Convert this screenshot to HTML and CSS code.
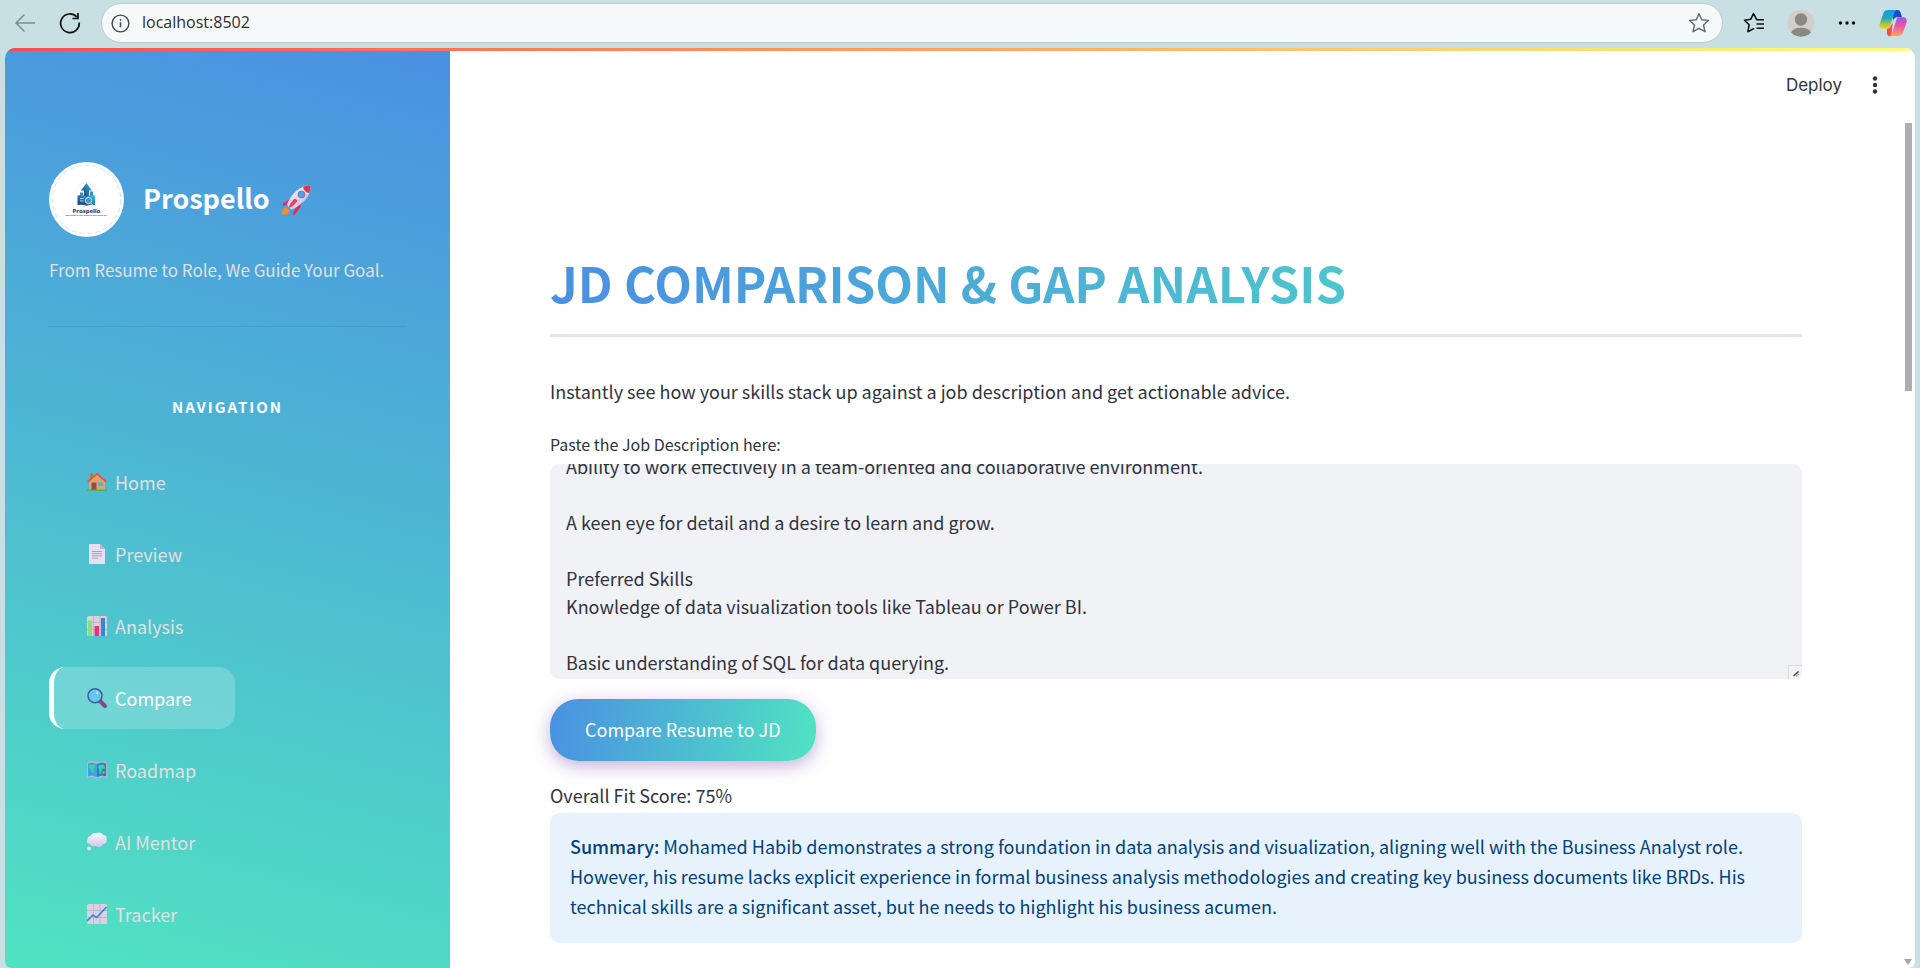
FILE: index.html
```html
<!DOCTYPE html>
<html lang="en">
<head>
<meta charset="utf-8">
<title>Prospello</title>
<link rel="stylesheet" href="styles.css">
</head>
<body>
<header class="toolbar">
  <button class="tool tool-back" aria-label="Back">
    <svg width="22" height="22" viewBox="0 0 22 22" fill="none" stroke="#7d8e93" stroke-width="1.5"><path d="M21 11H2M10.500 2.500 2 11l8.500 8.500"/></svg>
  </button>
  <button class="tool tool-reload" aria-label="Reload">
    <svg width="22" height="22" viewBox="0 0 22 22" fill="none" stroke="#111" stroke-width="1.700"><path d="M20.200 10.500A9.300 9.300 0 1 1 17.800 5M19 1v5.500h-5.500"/></svg>
  </button>
  <div class="address">
    <svg width="19" height="19" viewBox="0 0 19 19" fill="none" stroke="#45494a" stroke-width="1.400"><circle cx="9.500" cy="9.500" r="8.400"/><path d="M9.500 8.300v5" stroke-width="1.600"/><circle cx="9.500" cy="5.900" r=".6" fill="#45494a" stroke-width=".8"/></svg>
    <input class="url" type="text" value="localhost:8502" aria-label="Address">
    <button class="tool" aria-label="Add to favorites">
      <svg width="22" height="22" viewBox="0 0 22 22" fill="none" stroke="#62686a" stroke-width="1.400" stroke-linejoin="round"><path d="m11 1.700 2.700 6 6.800.7-5 4.600 1.500 6.700-6-3.400-6 3.400L6.500 13l-5-4.600 6.800-.7Z"/></svg>
    </button>
  </div>
  <div class="tools">
    <button class="tool" aria-label="Favorites">
      <svg width="22" height="22" viewBox="0 0 22 22" fill="none" stroke="#111" stroke-width="1.600" stroke-linejoin="round"><path d="M21 7.700h-7.300L10.500 1.500 7.800 7.200 1.500 8.200l4.600 4.600-1.200 6.900 6.300-3.300M13.500 12h7.500M13.500 16.300h7.500"/></svg>
    </button>
    <button class="tool" aria-label="Profile">
      <svg width="28" height="28" viewBox="0 0 28 28"><circle cx="14" cy="14" r="13.500" fill="#d2cfcb"/><circle cx="14" cy="10.500" r="6.200" fill="#8b8783"/><path d="M4 23.200a11 7.500 0 0 1 20 0 13.500 13.500 0 0 1-20 0Z" fill="#8b8783"/></svg>
    </button>
    <button class="tool" aria-label="Settings and more">
      <svg width="20" height="20" viewBox="0 0 20 20" fill="#111"><circle cx="3.500" cy="10" r="1.700"/><circle cx="10" cy="10" r="1.700"/><circle cx="16.500" cy="10" r="1.700"/></svg>
    </button>
    <button class="tool" aria-label="Copilot">
      <svg width="28" height="28" viewBox="0 0 28 28">
        <defs>
          <linearGradient id="cpA" x1="0" y1="0" x2="0" y2="1"><stop offset="0" stop-color="#1597ee"/><stop offset=".45" stop-color="#2aa6b8"/><stop offset=".75" stop-color="#a5c93f"/><stop offset="1" stop-color="#ffc928"/></linearGradient>
          <linearGradient id="cpB" x1="0" y1="0" x2="0" y2="1"><stop offset="0" stop-color="#a64df0"/><stop offset=".5" stop-color="#ee5a9c"/><stop offset="1" stop-color="#ffa35c"/></linearGradient>
        </defs>
        <path d="M13 1h5.500c2 0 2.800 1.400 3.300 3.200L23 8.200h-5c-2.200 0-3 1.300-3.700 3.500Z" fill="#174bd0"/>
        <path d="M9.500 1H18c-1.600.4-2.300 1.600-2.900 3.500l-4 12.800c-.6 1.800-1.800 2.400-3.600 2.400H4.300C.800 19.700.2 17 1 14L4.200 4.600C5 2.100 6.700 1 9.500 1Z" fill="url(#cpA)"/>
        <path d="M8 19.700c2 0 3-.8 3.600-2.500l2.200-4-1.500 14H11c-2 0-2.600-1.200-3.100-3Z" fill="#f0523d"/>
        <path d="M18.500 27h-8c1.500-.4 2.200-1.500 2.800-3.400l3.900-12.400c.6-2 1.700-3 3.700-3h3.300c3 0 4 2.600 3.200 5.600L24 23.500c-.8 2.400-2.600 3.500-5.500 3.500Z" fill="url(#cpB)"/>
      </svg>
    </button>
  </div>
</header>

<div class="app">
  <div class="accent"></div>
  <aside class="sidebar">
    <div class="brand">
      <svg class="logo" width="75" height="75" viewBox="0 0 75 75" role="img" aria-label="Prospello logo">
        <defs><linearGradient id="lg" x1="1" y1="0" x2="0" y2="1"><stop offset="0" stop-color="#30c9cf"/><stop offset=".5" stop-color="#2677ad"/><stop offset="1" stop-color="#262b72"/></linearGradient></defs>
        <circle cx="37.500" cy="37.500" r="37.500" fill="#fff"/>
        <circle cx="37.500" cy="37.500" r="34.300" fill="none" stroke="#b9def0" stroke-width=".8" stroke-dasharray="5 3"/>
        <circle cx="37.500" cy="33" r="12" fill="none" stroke="#eef2f4" stroke-width=".7"/>
        <path d="m37.500 21 5.500 7.500h-3V35h-5v-6.500h-3Z" fill="url(#lg)"/>
        <path d="M28.500 33.500q5-1.500 9 1 4-2.500 8.500-1V43q-4-1-8.500.8-4.500-1.800-9-.8Z" fill="url(#lg)"/>
        <path d="M31 30.500h3v3h-3zM41 29.500h3v4h-3z" fill="#3790b8"/>
        <circle cx="39.500" cy="38.500" r="3.200" fill="#5294bd" stroke="#d8f5fa" stroke-width=".8"/>
        <path d="m42 41 3 3.500M31 36.500h3.500M31 39h3.500" stroke="#a6dce7" stroke-width="1"/>
        <text x="37.500" y="51" class="logo-name">Prospello</text>
        <path d="M16.500 53.500h42" stroke="#8c93a8" stroke-width=".8" stroke-dasharray="4 .6 6 .5 2 .6"/>
      </svg>
      <h2 class="brand-name">Prospello</h2>
      <svg width="32" height="32" viewBox="0 0 32 32" role="img" aria-label="Rocket">
        <defs><linearGradient id="rk" x1="0" y1="0" x2="1" y2="1"><stop offset="0" stop-color="#fbf6ff"/><stop offset="1" stop-color="#c4b3cc"/></linearGradient></defs>
        <path d="M6 23c-3 1-4.500 4.500-4.500 7.500 3 0 7-.5 8.500-3.500Z" fill="#fb8b2b"/>
        <path d="m10 15-7 4.500c-1 1-.500 2 .8 2l4.700-.5ZM17 21.500 12.500 30c.5 1.200 2 1 2.800.1L20.500 23l.5-6Z" fill="#e9285f"/>
        <path d="M30.500 1.500C21 1 13 7.500 7 20c.3 2 3 5 5 5.500C24.500 19.500 31 11 30.500 1.500Z" fill="url(#rk)"/>
        <path d="M30.500 1.500c-2.500 0-5 .3-7.500 1.700 1 3 2.500 5 6 6 1-2.500 1.500-5 1.500-7.700Z" fill="#e72f50"/>
        <circle cx="21.500" cy="10.500" r="3.800" fill="#7b7cb3"/><circle cx="21.500" cy="10.500" r="2.600" fill="#49a7f4"/>
        <path d="M15 14.500c-3 2-5.500 6-6.500 9.500 3.500-1 7-4 9-7.500Z" fill="#ef3b70"/>
      </svg>
    </div>
    <p class="tagline">From Resume to Role, We Guide Your Goal.</p>
    <hr class="divider">
    <h3 class="nav-title">NAVIGATION</h3>
    <nav class="nav">
      <a class="nav-item" href="#home">
        <svg width="20" height="20" viewBox="0 0 20 20"><path d="M3 1.500h3V8H3z" fill="#b17a50"/><path d="M2 9.500 10 2.500l8 7V18H2z" fill="#dba372"/><path d="M0 9.500 10 .7l10 8.800-1.200 1L10 3 1.200 10.500Z" fill="#ee4f32"/><path d="M4.500 10.500h5V18h-5z" fill="#87544a"/><path d="M11.500 10.500h4.500v3.500h-4.500z" fill="#35b5f3"/><path d="M0 17.500h20V19H0z" fill="#40b95a"/></svg>
        Home</a>
      <a class="nav-item" href="#preview">
        <svg width="20" height="20" viewBox="0 0 20 20"><path d="M2 0h11l5 5v15H2z" fill="#e6dff0"/><path d="M13 0v5h5z" fill="#bcb2c9"/><path d="M5 7.500h10M5 9.700h10M5 11.900h10M5 14.200h6" stroke="#aaa0b8"/></svg>
        Preview</a>
      <a class="nav-item" href="#analysis">
        <svg width="20" height="20" viewBox="0 0 20 20"><rect width="20" height="20" rx="1.500" fill="#d9d2e1"/><path d="M0 6.500h20M0 13.500h20M6.500 0v20M13 0v20" stroke="#b9aec6" stroke-width=".8"/><path d="M1 4.500h4V20H1z" fill="#8be07a"/><path d="M7.500 10h4.500v10H7.500z" fill="#e8337a"/><path d="M14 2h4v18h-4z" fill="#3189df"/></svg>
        Analysis</a>
      <a class="nav-item active" href="#compare" aria-current="page">
        <svg width="20" height="20" viewBox="0 0 20 20"><path d="m12.500 12.500 5.500 5.500" stroke="#884a88" stroke-width="4" stroke-linecap="round"/><circle cx="8" cy="7.800" r="7" fill="#63caeb" stroke="#465b9c" stroke-width="1.500"/><circle cx="10.300" cy="4.800" r="1.300" fill="#a9e6fa"/></svg>
        Compare</a>
      <a class="nav-item" href="#roadmap">
        <svg width="20" height="20" viewBox="0 0 20 20"><path d="m0 2 5-1 5 1.500L15 1l5 1v16l-5-1-5 1.500L5 17l-5 1Z" fill="#b8b4d7"/><path d="m1 3.500 4-1 5 1.500v13l-5-1.500-4 1Z" fill="#35a5ed"/><path d="m10 4 5-1.500 4 1v13l-4-1-5 1.500Z" fill="#267fcf"/><path d="m2 5 5-.5 1.500 2L6 9l1 3-1.500 2L4 10 2.500 8ZM12 5l5-.5 1 4-3 .5-1 5-2-1 .5-3-1.500-2ZM16 11l2 .5-1 2.500-2-1Z" fill="#47cf92"/></svg>
        Roadmap</a>
      <a class="nav-item" href="#mentor">
        <svg width="20" height="20" viewBox="0 0 20 20"><defs><linearGradient id="cl" x2="0" y2="1"><stop stop-color="#faf7ff"/><stop offset="1" stop-color="#d2c7e6"/></linearGradient></defs><path d="M4 4C5 .8 8 .8 9.500 1.500 12-.5 15 .5 16 3c3 0 4 2 3.500 4 1 3-1 5-3.500 5-1.500 3-5 4-7 2-3 1-5 0-6-2C0 12-.500 9 .5 7.500.2 5.500 2 4 4 4Z" fill="url(#cl)"/><circle cx="2" cy="16.500" r="1.900" fill="#e9e1f5"/></svg>
        AI Mentor</a>
      <a class="nav-item" href="#tracker">
        <svg width="20" height="20" viewBox="0 0 20 20"><rect width="20" height="20" rx="1.500" fill="#d9d0e0"/><path d="M0 6.500h20M0 13.500h20M6.500 0v20M13 0v20" stroke="#b9aec6" stroke-width=".8"/><path d="m0 17 6-6 3.500 2.500L19.500 3" fill="none" stroke="#328bd4" stroke-width="1.600"/></svg>
        Tracker</a>
    </nav>
  </aside>

  <main class="main">
    <div class="app-header">
      <button class="deploy">Deploy</button>
      <button class="tool" aria-label="Menu">
        <svg width="8" height="20" viewBox="0 0 8 20" fill="#31333f"><circle cx="4" cy="3.500" r="2.200"/><circle cx="4" cy="10" r="2.200"/><circle cx="4" cy="16.500" r="2.200"/></svg>
      </button>
    </div>
    <section class="content">
      <h1 class="title">JD COMPARISON &amp; GAP ANALYSIS</h1>
      <p class="intro">Instantly see how your skills stack up against a job description and get actionable advice.</p>
      <label class="label" for="jd">Paste the Job Description here:</label>
      <div class="field">
        <textarea id="jd" class="textarea">Ability to work effectively in a team-oriented and collaborative environment.

A keen eye for detail and a desire to learn and grow.

Preferred Skills
Knowledge of data visualization tools like Tableau or Power BI.

Basic understanding of SQL for data querying.</textarea>
        <svg class="grip" width="14" height="14" viewBox="0 0 14 14"><path d="M0 0h14v10q-1 3-4 4H0Z" fill="#f4f4f6"/><path d="M.5 14V.5H14" fill="none" stroke="#dcdcdc"/><path d="m5.500 11 5-4.500" stroke="#444" stroke-width="1.600"/><path d="m8 11.500 3-2.500" stroke="#aaa" stroke-width="1.500"/></svg>
      </div>
      <button class="compare">Compare Resume to JD</button>
      <p class="score">Overall Fit Score: 75%</p>
      <div class="summary"><strong>Summary:</strong> Mohamed Habib demonstrates a strong foundation in data analysis and visualization, aligning well with the Business Analyst role. However, his resume lacks explicit experience in formal business analysis methodologies and creating key business documents like BRDs. His technical skills are a significant asset, but he needs to highlight his business acumen.</div>
    </section>
    <div class="scroll-thumb"></div>
    <div class="scroll-arrow"></div>
  </main>
</div>
<script src="script.js"></script>
</body>
</html>
```

FILE: styles.css
```css
* { box-sizing: border-box; }

body {
  margin: 0;
  height: 100vh;
  overflow: hidden;
  display: flex;
  flex-direction: column;
  background: #c8dfe3;
  color: #31333f;
  font-family: "Noto Sans CJK SC", "Noto Sans", sans-serif;
  font-size: 18px;
  line-height: 28px;
}

h1, h2, h3, p { margin: 0; }
svg { display: block; flex: none; }
button { font: inherit; border: 0; padding: 0; background: none; cursor: pointer; }

/* Browser toolbar */
.toolbar {
  display: flex;
  align-items: center;
  flex: none;
  height: 48px;
  padding: 0 13px 2px 14px;
}
.tool-reload { margin: 0 20px 0 23px; }
.address {
  flex: 1;
  display: flex;
  align-items: center;
  gap: 12px;
  height: 40px;
  padding: 0 12px 0 9px;
  border: 1px solid #c2c9cb;
  border-radius: 20px;
  background: #f5f9fa;
}
.url {
  flex: 1;
  min-width: 0;
  border: 0;
  padding: 0 0 2px;
  outline: 0;
  background: none;
  color: #2b2e2f;
  font: 16px "Open Sans", sans-serif;
}
.tools {
  display: flex;
  align-items: center;
  gap: 22px;
  padding-left: 20px;
}

/* App frame */
.app {
  position: relative;
  flex: 1;
  min-height: 0;
  display: flex;
  margin: 0 5px;
  border-radius: 10px 10px 6px 6px;
  overflow: hidden;
  background: #fff;
}
.accent {
  position: absolute;
  inset: 0 0 auto;
  height: 3px;
  background: linear-gradient(90deg, #ff4b4b, #fffd80);
}

/* Sidebar */
.sidebar {
  flex: none;
  width: 445px;
  padding: 114px 44px 0;
  background: linear-gradient(195deg, #4a90e2, #50e3c2);
}
.brand { display: flex; align-items: center; }
.brand-name {
  margin: 0 10px 0 19px;
  padding-bottom: 3px;
  color: #fff;
  font-size: 27px;
  line-height: 36px;
}
.logo-name {
  font: 700 6px "Noto Sans", sans-serif;
  fill: #262b62;
  text-anchor: middle;
}
.tagline { margin-top: 19px; font-size: 17px; color: #e0e0e0; }
.divider {
  margin: 42px 0 66px;
  border: 0;
  border-top: 1px solid rgba(49, 51, 63, 0.1);
}
.nav-title {
  color: #fff;
  font-size: 15px;
  letter-spacing: 2px;
  text-align: center;
}
.nav {
  display: flex;
  flex-direction: column;
  align-items: flex-start;
  gap: 10px;
  margin-top: 30px;
}
.nav-item {
  display: flex;
  align-items: center;
  gap: 8px;
  height: 62px;
  padding: 0 43px 0 33px;
  border-left: 5px solid transparent;
  border-radius: 16px;
  color: #e0e0e0;
  text-decoration: none;
}
.nav-item.active {
  border-color: #fff;
  background: rgba(255, 255, 255, 0.2);
  color: #fff;
}

/* Main */
.main {
  position: relative;
  flex: 1;
  min-width: 0;
}
.app-header {
  display: flex;
  justify-content: flex-end;
  align-items: center;
  gap: 29px;
  height: 76px;
  padding: 0 36px 2px 0;
}
.deploy { color: #31333f; font: 17px "Inter", sans-serif; }
.content {
  display: flex;
  flex-direction: column;
  align-items: stretch;
  padding: 76px 113px 0 100px;
}
.title {
  padding: 50px 0 20px;
  border-bottom: 3px solid #e0e6f0;
  background: linear-gradient(90deg, #4a90e2, #50e3c2);
  background-clip: text;
  -webkit-background-clip: text;
  color: transparent;
  font-size: 49px;
  line-height: 64px;
}
.intro { margin: 40px 0 25px; }
.label { font-size: 16px; margin-bottom: 6px; }
.field { position: relative; }
.textarea {
  display: block;
  width: 100%;
  height: 215px;
  padding: 16px 16px 3px;
  border: 0;
  border-radius: 9px;
  outline: 0;
  resize: none;
  scrollbar-width: none;
  background: #f0f2f6;
  color: #31333f;
  font: inherit;
}
.grip { position: absolute; right: 0; bottom: 0; }
.compare {
  align-self: flex-start;
  height: 62px;
  margin: 20px 0;
  padding: 0 35px 3px;
  border-radius: 28px;
  background: linear-gradient(100deg, #4a90e2, #50e3c2);
  box-shadow: 0 5px 18px rgba(90, 30, 150, 0.35);
  color: #fff;
}
.score { margin-bottom: 4px; }
.summary {
  padding: 18px 20px 22px;
  border-radius: 10px;
  background: #e8f2fc;
  color: #004280;
  line-height: 30px;
}
.summary strong { font-weight: 500; }
.scroll-thumb {
  position: absolute;
  top: 75px;
  right: 3px;
  width: 7px;
  height: 268px;
  background: #aeadb3;
}
.scroll-arrow {
  position: absolute;
  right: 3px;
  bottom: 3px;
  border: 4px solid transparent;
  border-top: 6px solid #a6a6a8;
  border-bottom: 0;
}
```

FILE: script.js
```js
const jd = document.getElementById("jd");
jd.scrollTop = jd.scrollHeight;
```
